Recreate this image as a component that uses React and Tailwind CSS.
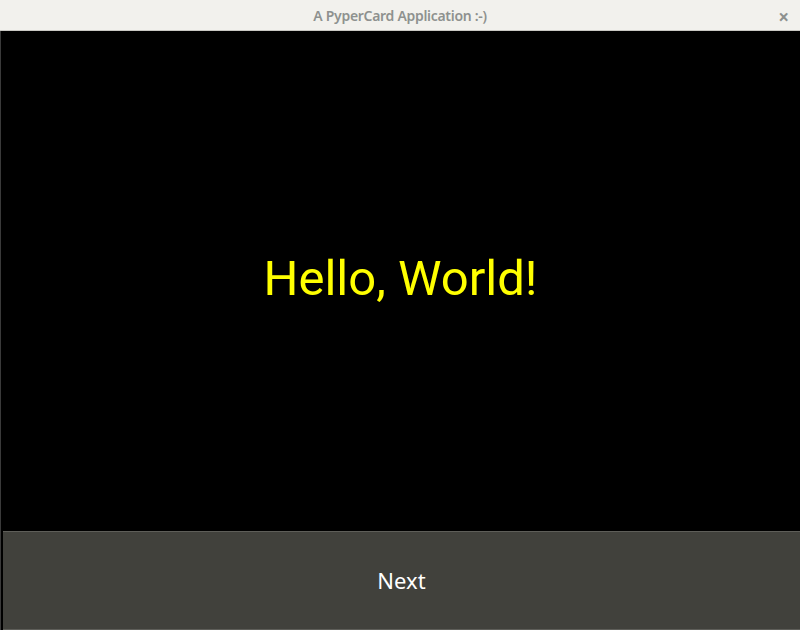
export default function App() {
  return (
    <div className="w-[800px] h-[630px] flex flex-col bg-black overflow-hidden" style={{ fontFamily: '"Noto Sans", sans-serif' }}>
      <div className="h-[31px] shrink-0 flex items-center justify-center relative bg-[#f2f1ed] border-b border-[#c9c8c3]">
        <span className="text-[14px] font-semibold text-[#8e918f] tracking-[-0.3px]">A PyperCard Application :-)</span>
        <span className="absolute right-[11px] top-[3px] text-[19px] font-bold text-[#8e918f]">×</span>
      </div>
      <div className="flex-1 flex border-l border-[#3a3a3a]">
        <div className="flex-1 flex flex-col">
          <div className="flex-1 flex items-center justify-center pb-[6px]">
            <span className="text-[49px] text-[#ffff00] leading-none" style={{ fontFamily: 'Roboto, sans-serif' }}>Hello, World!</span>
          </div>
          <button className="h-[99px] shrink-0 ml-[2px] bg-[#41413c] border-t border-[#5e5e59] border-b border-[#2a2a27] flex items-center justify-center text-[22px] text-white">
            Next
          </button>
        </div>
      </div>
    </div>
  );
}
